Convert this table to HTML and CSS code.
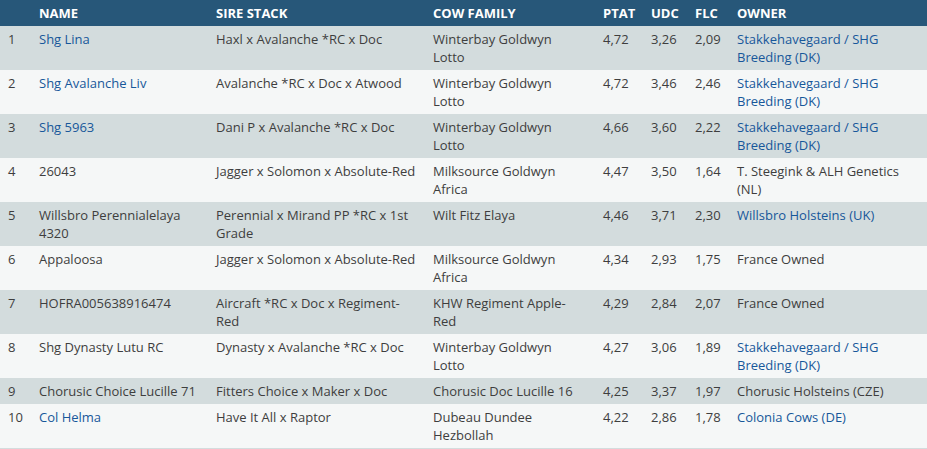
FILE: index.html
```html
<!DOCTYPE html>
<html lang="en">
<head>
<meta charset="utf-8">
<title>Top PTAT</title>
<link rel="stylesheet" href="styles.css">
</head>
<body>
<table class="rank">
  <colgroup>
    <col class="c-no"><col class="c-name"><col class="c-sire"><col class="c-cow"><col class="c-ptat"><col class="c-udc"><col class="c-flc"><col class="c-owner">
  </colgroup>
  <thead>
    <tr><th></th><th>Name</th><th>Sire Stack</th><th>Cow Family</th><th>PTAT</th><th>UDC</th><th>FLC</th><th>Owner</th></tr>
  </thead>
  <tbody>
    <tr><td>1</td><td><a href="#">Shg Lina</a></td><td>Haxl x Avalanche *RC x Doc</td><td class="cow">Winterbay Goldwyn Lotto</td><td>4,72</td><td>3,26</td><td>2,09</td><td><a href="#">Stakkehavegaard / SHG Breeding (DK)</a></td></tr>
    <tr><td>2</td><td><a href="#">Shg Avalanche Liv</a></td><td>Avalanche *RC x Doc x Atwood</td><td class="cow">Winterbay Goldwyn Lotto</td><td>4,72</td><td>3,46</td><td>2,46</td><td><a href="#">Stakkehavegaard / SHG Breeding (DK)</a></td></tr>
    <tr><td>3</td><td><a href="#">Shg 5963</a></td><td>Dani P x Avalanche *RC x Doc</td><td class="cow">Winterbay Goldwyn Lotto</td><td>4,66</td><td>3,60</td><td>2,22</td><td><a href="#">Stakkehavegaard / SHG Breeding (DK)</a></td></tr>
    <tr><td>4</td><td>26043</td><td>Jagger x Solomon x Absolute-Red</td><td class="cow">Milksource Goldwyn Africa</td><td>4,47</td><td>3,50</td><td>1,64</td><td>T. Steegink &amp; ALH Genetics (NL)</td></tr>
    <tr><td>5</td><td>Willsbro Perennialelaya 4320</td><td>Perennial x Mirand PP *RC x 1st Grade</td><td class="cow">Wilt Fitz Elaya</td><td>4,46</td><td>3,71</td><td>2,30</td><td><a href="#">Willsbro Holsteins (UK)</a></td></tr>
    <tr><td>6</td><td>Appaloosa</td><td>Jagger x Solomon x Absolute-Red</td><td class="cow">Milksource Goldwyn Africa</td><td>4,34</td><td>2,93</td><td>1,75</td><td>France Owned</td></tr>
    <tr><td>7</td><td>HOFRA005638916474</td><td>Aircraft *RC x Doc x Regiment-Red</td><td class="cow">KHW Regiment Apple-Red</td><td>4,29</td><td>2,84</td><td>2,07</td><td>France Owned</td></tr>
    <tr><td>8</td><td>Shg Dynasty Lutu RC</td><td>Dynasty x Avalanche *RC x Doc</td><td class="cow">Winterbay Goldwyn Lotto</td><td>4,27</td><td>3,06</td><td>1,89</td><td><a href="#">Stakkehavegaard / SHG Breeding (DK)</a></td></tr>
    <tr><td>9</td><td>Chorusic Choice Lucille 71</td><td>Fitters Choice x Maker x Doc</td><td class="cow">Chorusic Doc Lucille 16</td><td>4,25</td><td>3,37</td><td>1,97</td><td>Chorusic Holsteins (CZE)</td></tr>
    <tr><td>10</td><td><a href="#">Col Helma</a></td><td>Have It All x Raptor</td><td class="cow">Dubeau Dundee Hezbollah</td><td>4,22</td><td>2,86</td><td>1,78</td><td><a href="#">Colonia Cows (DE)</a></td></tr>
  </tbody>
</table>
</body>
</html>
```
FILE: styles.css
```css
html, body {
  margin: 0;
  padding: 0;
  background: #ffffff;
}

.rank {
  width: 927px;
  border-collapse: collapse;
  table-layout: fixed;
  font-family: "Open Sans", "Liberation Sans", sans-serif;
  font-size: 13px;
  line-height: 18px;
  color: #3e3e3e;
}

.c-no { width: 31px; }
.c-name { width: 177px; }
.c-sire { width: 217px; }
.c-cow { width: 170px; }
.c-ptat { width: 48px; }
.c-udc { width: 44px; }
.c-flc { width: 42px; }
.c-owner { width: 198px; }

.rank th {
  background: #275779;
  color: #ffffff;
  font-weight: 700;
  text-transform: uppercase;
  text-align: left;
  padding: 4px 8px;
  white-space: nowrap;
}

.rank td {
  padding: 4px 8px;
  vertical-align: top;
  text-align: left;
}

.rank td.cow {
  padding-right: 14px;
}

.rank tbody tr:nth-child(odd) { background: #d3dcdd; }
.rank tbody tr:nth-child(even) { background: #f5f7f7; }
.rank tbody tr:last-child { border-bottom: 1px solid #d3dcdd; }

.rank a {
  color: #17579a;
  text-decoration: none;
}
```
